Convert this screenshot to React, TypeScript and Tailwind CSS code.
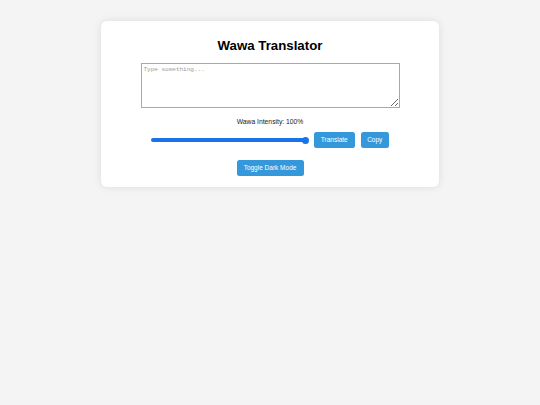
import React from "react";

export default function App() {
  return (
    <div className="min-h-[405px] w-full bg-[#f4f4f4] pt-[21px]" style={{ fontFamily: '"Liberation Sans", Arial, sans-serif' }}>
      <div className="mx-auto flex w-[338px] flex-col items-center rounded-[6px] bg-white pt-[17px] pb-[11px] shadow-[0_0_8px_rgba(0,0,0,0.1)]">
        <h1 className="text-[13.25px] font-bold leading-[16px] text-black">Wawa Translator</h1>
        <textarea
          placeholder="Type something..."
          className="mt-[9px] block h-[45px] w-[259px] resize border border-[#a9a9a9] bg-white p-[2px] text-[6px] leading-[7px] text-black placeholder:text-[#999] outline-none"
          style={{ fontFamily: '"Liberation Mono", "DejaVu Sans Mono", monospace' }}
        />
        <div className="mt-[10px] text-[6.75px] leading-[8px] text-[#222]">Wawa Intensity: 100%</div>
        <div className="mt-[6px] flex items-center">
          <div className="flex w-[158px] items-center">
            <div className="h-[3.5px] flex-1 rounded-full bg-[#1a73e8]" />
            <div className="-ml-[3px] h-[7px] w-[7px] rounded-full bg-[#1a73e8]" />
          </div>
          <button className="ml-[5px] flex h-[16px] w-[40.5px] items-center justify-center rounded-[2.5px] bg-[#3498db] text-[6.5px] text-white">
            Translate
          </button>
          <button className="ml-[6px] flex h-[16px] w-[28.5px] items-center justify-center rounded-[2.5px] bg-[#3498db] text-[6.5px] text-white">
            Copy
          </button>
        </div>
        <button className="mt-[12px] flex h-[16px] w-[67px] items-center justify-center rounded-[2.5px] bg-[#3498db] text-[6.5px] text-white">
          Toggle Dark Mode
        </button>
      </div>
    </div>
  );
}
